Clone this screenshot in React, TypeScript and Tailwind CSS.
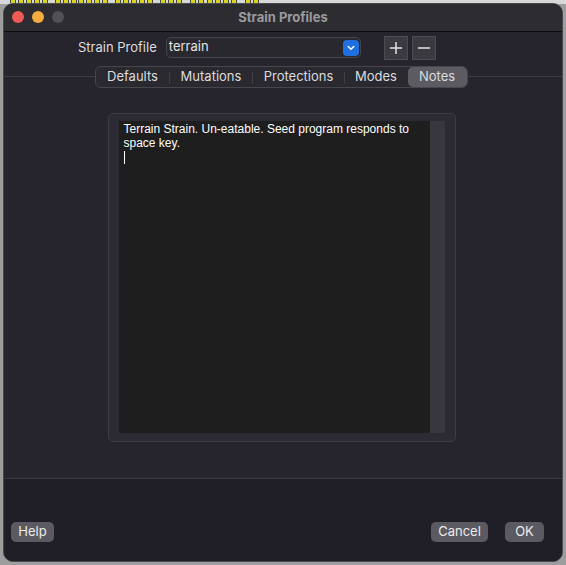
import React, { useState } from 'react';

const tabs = [
  { label: 'Defaults', w: 'w-[74px]' },
  { label: 'Mutations', w: 'w-[83px]' },
  { label: 'Protections', w: 'w-[92px]' },
  { label: 'Modes', w: 'w-[63px]' },
  { label: 'Notes', w: 'w-[59px]' },
];

const bgSquares = [10, 18, 26, 34, 42, 55, 63, 71, 78, 86, 94, 102, 115, 123, 131, 139, 147, 160, 168, 176, 190, 198, 207, 215, 223, 231, 245, 253];

const App = () => {
  const [active, setActive] = useState('Notes');
  const notes = 'Terrain Strain. Un-eatable. Seed program responds to space key.';

  return (
    <div className="relative w-[566px] h-[565px] bg-[#9d9d9d] p-[3px] font-['Inter',sans-serif] overflow-hidden">
      {/* desktop peeking out behind the window */}
      <div className="absolute top-0 left-0 w-[566px] h-[4px] bg-[#d8d8d8]">
        {bgSquares.map((x) => (
          <div key={x} className="absolute top-0 h-[3px] w-[6px] bg-[#d6d61a] border-x border-[#444]" style={{ left: x }} />
        ))}
      </div>

      <div className="relative flex flex-col h-full rounded-[10px] overflow-hidden border border-[#4a4950] bg-[#25232c]">
        {/* title bar */}
        <div className="relative h-[28px] flex items-center justify-center bg-[#2d2c31] border-b border-[#0c0c0e]">
          <div className="absolute left-[8px] top-[7px] flex gap-[8px]">
            <span className="w-[12px] h-[12px] rounded-full bg-[#ee5b56]" />
            <span className="w-[12px] h-[12px] rounded-full bg-[#f4ae3d]" />
            <span className="w-[12px] h-[12px] rounded-full bg-[#505056]" />
          </div>
          <span className="text-[13px] font-bold text-[#9b9a9f]">Strain Profiles</span>
        </div>

        {/* body */}
        <div className="flex flex-col h-[446px] bg-[#26242d]">
          <div className="flex items-center h-[23px] mt-[4px] pl-[74px]">
            <span className="text-[13px] text-[#dcdcdf] mr-[9px]">Strain Profile</span>
            <div className="flex items-center justify-between w-[195px] h-[21px] rounded-[5px] border border-[#45444b] bg-[#29282e] pl-[2px] pr-[1px]">
              <span className="text-[13px] text-[#e4e4e6] leading-none -mt-[2px]">terrain</span>
              <span className="w-[16px] h-[16px] rounded-[4px] bg-[#1f6fe0] flex items-center justify-center">
                <svg width="8" height="6" viewBox="0 0 8 6">
                  <path d="M1.2 1.5 L4 4.2 L6.8 1.5" fill="none" stroke="#fff" strokeWidth="1.5" strokeLinecap="round" strokeLinejoin="round" />
                </svg>
              </span>
            </div>
            <button className="ml-[23px] w-[24px] h-[24px] bg-[#3b3a40] border border-[#4d4c52] flex items-center justify-center">
              <svg width="14" height="14" viewBox="0 0 14 14">
                <path d="M7 1 V13 M1 7 H13" stroke="#e6e6e8" strokeWidth="1.5" />
              </svg>
            </button>
            <button className="ml-[4px] w-[24px] h-[24px] bg-[#3b3a40] border border-[#4d4c52] flex items-center justify-center">
              <svg width="14" height="14" viewBox="0 0 14 14">
                <path d="M1 7 H13" stroke="#e6e6e8" strokeWidth="1.5" />
              </svg>
            </button>
          </div>

          {/* tabs */}
          <div className="relative flex justify-center mt-[7px] h-[22px] pr-[4px]">
            <div className="absolute left-0 right-0 top-[10px] h-px bg-[#3c3b42]" />
            <div className="relative flex items-center h-[22px] rounded-[6px] border border-[#47464d] bg-[#2a2930]">
              {tabs.map((t, i) => {
                const sel = t.label === active;
                const next = tabs[i + 1];
                const showSep = i < tabs.length - 1 && !sel && !(next && next.label === active);
                return (
                  <div key={t.label} className={`relative h-full flex items-center ${t.w}`}>
                    <button
                      onClick={() => setActive(t.label)}
                      className={`w-full h-full text-[13px] text-[#dcdcdf] rounded-[5px] ${sel ? 'bg-[#5c5b62]' : ''}`}
                    >
                      {t.label}
                    </button>
                    {showSep && <span className="absolute right-0 top-[5px] w-px h-[12px] bg-[#3f3e45]" />}
                  </div>
                );
              })}
            </div>
          </div>

          {/* notes group box */}
          <div className="flex justify-center mt-[25px] pr-[3px]">
            <div className="w-[348px] h-[329px] rounded-[5px] border border-[#3d3c44] bg-[#2c2b33] pt-[7px] pl-[10px]">
              <div className="flex h-[312px]">
                <div className="w-[311px] h-full bg-[#1e1e1e] text-white text-[12px] leading-[14px] pl-[5px] pt-[1px] pr-[10px] font-['Liberation_Sans',sans-serif]">
                  <p>{notes}</p>
                  <span className="block w-px h-[13px] mt-[1px] bg-white" />
                </div>
                <div className="w-[15px] h-full bg-[#38373e]" />
              </div>
            </div>
          </div>
        </div>

        {/* footer */}
        <div className="flex-1 flex items-end justify-between border-t border-[#3a3940] bg-[#201f27] pl-[7px] pr-[18px] pb-[19px]">
          <button className="h-[20px] w-[43px] rounded-[5px] bg-[#5b5a61] text-[13px] text-[#ececee]">Help</button>
          <div className="flex gap-[17px]">
            <button className="h-[20px] w-[57px] rounded-[5px] bg-[#5b5a61] text-[13px] text-[#ececee]">Cancel</button>
            <button className="h-[20px] w-[39px] rounded-[5px] bg-[#5b5a61] text-[13px] text-[#ececee]">OK</button>
          </div>
        </div>
      </div>
    </div>
  );
};

export default App;
